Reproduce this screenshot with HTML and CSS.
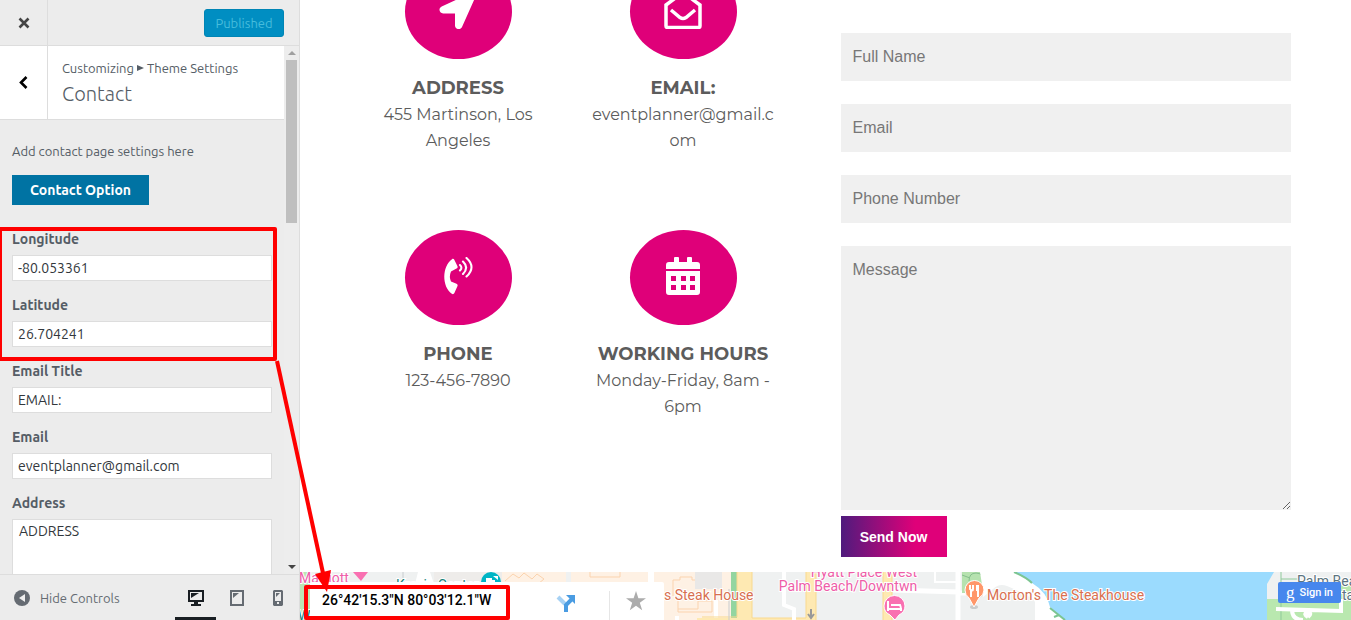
FILE: index.html
```html
<!DOCTYPE html>
<html lang="en">
<head>
<meta charset="utf-8">
<title>Customizing: Contact</title>
<link rel="stylesheet" href="styles.css">
</head>
<body>
<aside class="sidebar">
  <header class="topbar">
    <button class="close" aria-label="Close"><svg width="12" height="12" viewBox="0 0 12 12"><path d="M1.5 1.5l9 9M10.500 1.500l-9 9" stroke="#444" stroke-width="2.600"/></svg></button>
    <button class="publish" disabled>Published</button>
  </header>
  <div class="panel">
    <div class="panel-body">
      <div class="section-head">
        <button class="back" aria-label="Back"><svg width="10" height="14" viewBox="0 0 10 14"><path d="M7.500 1L2 6.500 7.500 12" fill="none" stroke="#000" stroke-width="2.600"/></svg></button>
        <div class="titles">
          <span class="crumb">Customizing <svg width="7" height="6" viewBox="0 0 7 6"><path d="M0 0l7 3-7 3z" fill="#555d66"/></svg> Theme Settings</span>
          <h3 class="title">Contact</h3>
        </div>
      </div>
      <form class="controls">
        <p class="description">Add contact page settings here</p>
        <button type="button" class="option">Contact Option</button>
        <div class="control"><label for="lng">Longitude</label><input id="lng" value="-80.053361"></div>
        <div class="control"><label for="lat">Latitude</label><input id="lat" value="26.704241"></div>
        <div class="control"><label for="etitle">Email Title</label><input id="etitle" value="EMAIL:"></div>
        <div class="control"><label for="email">Email</label><input id="email" value="eventplanner@gmail.com"></div>
        <div class="control"><label for="addr">Address</label><textarea id="addr">ADDRESS</textarea></div>
      </form>
    </div>
    <div class="scrollbar">
      <svg width="8" height="4" viewBox="0 0 8 4"><path d="M0 4l4-4 4 4z" fill="#a0a0a0"/></svg>
      <div class="thumb"></div>
      <svg class="down" width="8" height="4" viewBox="0 0 8 4"><path d="M0 0l4 4 4-4z" fill="#444"/></svg>
    </div>
  </div>
  <footer class="bottombar">
    <button class="collapse"><svg width="16" height="16" viewBox="0 0 16 16"><circle cx="8" cy="8" r="8" fill="#656b72"/><path d="M11 4v8L5 8z" fill="#eee"/></svg>Hide Controls</button>
    <div class="devices">
      <button class="device active" aria-label="Desktop"><svg width="16" height="16" viewBox="0 0 16 16"><path d="M0 0h16v12h-6v2h3v2H3v-2h3v-2H0zM2 2v8h12V2z" fill="#191e23" fill-rule="evenodd"/><path d="M3 3h8L3 8z" fill="#191e23"/></svg></button>
      <button class="device" aria-label="Tablet"><svg width="14" height="16" viewBox="0 0 14 16"><path d="M0 0h14v16H0zM2 2v12h10V2z" fill="#656b72" fill-rule="evenodd"/><path d="M3 3h6L3 8z" fill="#656b72"/></svg></button>
      <button class="device" aria-label="Mobile"><svg width="10" height="16" viewBox="0 0 10 16"><path d="M1 0h8l1 1v14l-1 1H1l-1-1V1zM2 2v9h6V2zM4 12v2h2v-2z" fill="#656b72" fill-rule="evenodd"/><path d="M3 3h4L3 7z" fill="#656b72"/></svg></button>
    </div>
  </footer>
</aside>

<main class="preview">
  <section class="contact">
    <div class="infos">
      <article class="info">
        <div class="disc"><svg width="38" height="38" viewBox="0 0 38 38"><path d="M34.500.8L2.700 15.500C-1 17.200.2 22.500 4.200 22.500H16v12c0 4 5.300 5 7 1.500L37.300 4c1-2.300-1-4.100-2.800-3.200z" fill="#fff"/></svg></div>
        <h4>ADDRESS</h4><p>455 Martinson, Los<br>Angeles</p>
      </article>
      <article class="info">
        <div class="disc"><svg width="38" height="38" viewBox="0 0 38 38"><path d="M2 35V14L16.500 3.200Q19 1.500 21.500 3.200L36 14v21q0 1.500-1.500 1.500h-31Q2 36.500 2 35z" fill="none" stroke="#fff" stroke-width="3.500"/><path d="M7 19l9 7.500q3 2 6 0L31 19" fill="none" stroke="#fff" stroke-width="3.500"/></svg></div>
        <h4>EMAIL:</h4><p>eventplanner@gmail.c<br>om</p>
      </article>
      <article class="info">
        <div class="disc"><svg width="34" height="38" viewBox="0 0 34 38"><path d="M11 2.200c1-.7 2-.2 2.400.7l3.100 6.300c.4 1-.1 2-1 2.300L10 14.500q-2.200 5 0 10l5.500 2.200c1 .4 1.400 1.400 1 2.300l-3.100 7c-.5 1.200-1.600 1.500-2.600.8C.8 29.500.8 9.500 11 2.200z" fill="#fff"/><path d="M19 8q2.800 2.500 0 5.500M22 4.500q6.200 6 0 12.500M25.500 1q10 9 0 18.500" fill="none" stroke="#fff" stroke-width="2.100" stroke-linecap="round"/></svg></div>
        <h4>PHONE</h4><p>123-456-7890</p>
      </article>
      <article class="info">
        <div class="disc"><svg width="34" height="38" viewBox="0 0 34 38"><path d="M3 5h5V1q0-1 1-1h3q1 0 1 1v4h8V1q0-1 1-1h3q1 0 1 1v4h5q3 0 3 3v4H0V8q0-3 3-3z" fill="#fff"/><path d="M0 14h34v21q0 3-3 3H3q-3 0-3-3zM5 19v5h5v-5zM15 19v5h5v-5zM24 19v5h5v-5zM5 28v5h5v-5zM15 28v5h5v-5zM24 28v5h5v-5z" fill="#fff" fill-rule="evenodd"/></svg></div>
        <h4>WORKING HOURS</h4><p>Monday-Friday, 8am -<br>6pm</p>
      </article>
    </div>
    <form class="message">
      <input placeholder="Full Name" aria-label="Full Name">
      <input placeholder="Email" aria-label="Email" type="email">
      <input placeholder="Phone Number" aria-label="Phone Number">
      <textarea placeholder="Message" aria-label="Message"></textarea>
      <button type="button" class="send">Send Now</button>
    </form>
  </section>

  <section class="map">
    <svg class="tiles" width="1051" height="48" viewBox="0 0 1051 48">
      <rect width="1051" height="48" fill="#eff1f1"/>
      <path d="M0 0h10v48H0z" fill="#bce7b5"/>
      <path d="M134 0h128v12H134z" fill="#eeecea"/>
      <path d="M202 0h64v12h-64zM271 0h77v12h-77zM354 0h77v48h-77z" fill="#fef1e4"/>
      <path d="M205 9l8-7 6 4 5-5 8 6 5-5 7 5-6 5M290 0v5h30V0M373 24V8h7V5h12v3h12V0M378 27v13h34V29h-14v8h-20" fill="none" stroke="#fbd3ae"/>
      <path d="M395 0h27v17h-27z" fill="#e9e8e7"/>
      <path d="M416 28v20M377 44v4" stroke="#fff" stroke-width="4"/>
      <path d="M431 0h6v48h-6z" fill="#93d5a0"/>
      <path d="M437 0h15v48h-15zM506 0h10v48h-10zM583 0h9v48h-9zM397 46h110v2H397z" fill="#fee9b2"/>
      <path d="M437 0v45h-35M452 0v46h54V0M516 0v48M583 0v48M592 0v48" fill="none" stroke="#f9d98e"/>
      <path d="M429 17v31" stroke="#c8cccf"/>
      <path d="M115 12l3-12h12l4 12zM348 0h6v12h-6z" fill="#fff"/>
      <path d="M484 0v33l10 4v11" fill="none" stroke="#fff" stroke-width="4"/>
      <path d="M635 0v10h22" fill="none" stroke="#fff" stroke-width="2"/>
      <path d="M593 18l66 2M658 0v48M659 21h18" fill="none" stroke="#fff" stroke-width="5"/>
      <path d="M662 0h18l12 8-11 13h-19z" fill="#b6e2af"/>
      <path d="M669 9q0-8 7-8t8 8M662 3l8 3M682 6l6-4" fill="none" stroke="#84bf8b"/>
      <path d="M680 0h50q19 15 20 35l15 13h-30V30q-2-5-28-16-8-3-14 3l-10 8v-6z" fill="#fff"/>
      <path d="M716 0h258l-7 12v36H765l-15-13q-3-15-18-24-8-6-16-11z" fill="#9bdbfe"/>
      <path d="M714 0q12 5 18 11M750 36l15 12M754 45l5-2" fill="none" stroke="#7cc591" stroke-width="2"/>
      <path d="M967 27h84v21h-84zM1040 10h11v38h-11z" fill="#b9e8af"/>
      <path d="M981 0v48M981 7h17" fill="none" stroke="#8fc99a"/>
      <path d="M976 37l65 2V27M1003 48q-10 0-11-9M1008 45q-5-3-1-5 6 1 1 5" fill="none" stroke="#fff" stroke-width="4"/>
      <path d="M103 0v12" stroke="#c8cccf"/>
      <path d="M511 37v9M508 42l3 4 3-4" fill="none" stroke="#999" stroke-width="2"/>
      <g class="pin-labels">
        <text x="-1" y="11" fill="#ee5da8">Marriott</text>
        <text x="96" y="18" fill="#168179">Kravis Center</text>
        <text x="-2" y="49" fill="#168179">W</text>
        <text x="364" y="28" fill="#d86f50">s Steak House</text>
        <text x="564" y="5" text-anchor="middle" fill="#ee5da8">Hyatt Place West</text>
        <text x="548" y="19" text-anchor="middle" fill="#ee5da8">Palm Beach/Downtwn</text>
        <text x="687" y="28" fill="#d86f50">Morton's The Steakhouse</text>
        <text x="997" y="14" fill="#5c7480">Palm Beach</text>
        <text x="1042" y="28" fill="#5c7480">ta</text>
      </g>
      <path d="M53 0h15l-7 9z" fill="#f970b1"/>
      <circle cx="191" cy="10" r="10" fill="#00b5c5"/><path d="M186 6h6v2h3v7h-9zM193 4h5v4" fill="#fff"/>
      <path d="M584 34a10 10 0 1 1 21 0q0 6-6 9l-4 5-5-5q-6-3-6-9z" fill="#f970b1" stroke="#fff"/>
      <path d="M588 29v10M588 37h13v2M591 33h9l1 3" fill="none" stroke="#fff" stroke-width="2"/>
      <ellipse cx="674" cy="35" rx="4" ry="2" fill="#c9cbcc"/>
      <path d="M665 18a9 9 0 1 1 19 0q0 5-5 8l-5 9-5-9q-4-3-4-8z" fill="#ff976a" stroke="#fff"/>
      <path d="M670 13v4q3 3 3 0v-4M671 18v7M678 13v12M677 13v6" fill="none" stroke="#fff" stroke-width="2"/>
    </svg>
    <div class="place-card">
      <strong>26°42'15.3"N 80°03'12.1"W</strong>
      <button class="directions" aria-label="Directions"><svg width="20" height="20" viewBox="0 0 20 20"><path d="M2 5l7 7" stroke="#a6d1f4" stroke-width="4"/><path d="M10 20v-7l6-6" fill="none" stroke="#4a9ce2" stroke-width="4"/><path d="M10 3h9v9z" fill="#4a9ce2"/></svg></button>
      <button class="save" aria-label="Save"><svg width="20" height="20" viewBox="0 0 20 20"><path d="M10 0l2.400 7.300H20l-6.200 4.500 2.400 7.500-6.200-4.600-6.200 4.600 2.400-7.500L0 7.300h7.600z" fill="#acacac"/></svg></button>
    </div>
    <button class="signin"><span class="g">g</span>Sign in</button>
  </section>
</main>

<svg class="annotation" width="520" height="620" viewBox="0 0 520 620" aria-hidden="true">
  <g fill="none" stroke="#f00" stroke-width="4">
    <rect x="0" y="229" width="275" height="130" stroke-linejoin="round"/>
    <rect x="306" y="587" width="202" height="31" stroke-linejoin="round"/>
    <path d="M277 361l46 212"/>
  </g>
  <path d="M315 574l16-4-4 22z" fill="#f00"/>
</svg>
</body>
</html>
```
FILE: styles.css
```css
* { box-sizing: border-box; }
body { margin: 0; height: 100vh; display: flex; overflow: hidden; position: relative; background: #fff; }
button, input, textarea { font: inherit; margin: 0; border: 0; border-radius: 0; outline: 0; }
button { padding: 0; background: none; }
h3, h4, p { margin: 0; }
svg { display: block; flex: none; }

.sidebar { width: 300px; flex: none; display: flex; flex-direction: column; background: #ececec; border-right: 1px solid #ddd; color: #555d66; font: 13px/18px Ubuntu, "Open Sans", sans-serif; }
.topbar { height: 46px; flex: none; display: flex; align-items: center; justify-content: space-between; border-bottom: 1px solid #ddd; padding-right: 15px; }
.close { width: 48px; height: 45px; border-right: 1px solid #ddd; display: grid; place-items: center; }
.publish { width: 80px; height: 28px; border: 1px solid #0085b5; border-radius: 3px; background: #008ec2; color: #46bcdc; }
.panel { flex: 1; min-height: 0; display: flex; }
.panel-body { flex: 1; overflow: hidden; }
.section-head { height: 74px; display: flex; background: #fff; border-bottom: 1px solid #ddd; }
.back { width: 48px; border-right: 1px solid #ddd; display: grid; place-items: center; }
.titles { padding: 13px 14px; }
.crumb { display: flex; align-items: center; gap: 3px; white-space: nowrap; }
.title { margin-top: 4px; font-size: 20px; line-height: 26px; font-weight: 300; }
.controls { padding: 22px 12px; }
.option { margin: 15px 0 25px; width: 137px; height: 30px; background: #0073a3; color: #fff; font-size: 14px; font-weight: 700; display: block; }
.control { margin-bottom: 15px; }
.control label { display: block; margin-bottom: 7px; font-size: 14px; font-weight: 600; }
.control input, .control textarea { display: block; width: 100%; height: 26px; border: 1px solid #ddd; padding: 0 5px; background: #fff; color: #32373c; font-size: 14px; resize: none; }
.control textarea { height: 100px; padding: 2px 6px; }
.scrollbar { width: 15px; padding: 5px 2px 5px 2px; display: flex; flex-direction: column; align-items: center; gap: 5px; background: #ededed; }
.thumb { width: 11px; height: 163px; background: #bfbfbf; }
.down { margin-top: auto; }
.bottombar { height: 46px; flex: none; display: flex; justify-content: space-between; border-top: 1px solid #ddd; padding: 0 1px 0 14px; }
.collapse { display: flex; align-items: center; gap: 10px; color: #656b72; }
.devices { display: flex; }
.device { width: 41px; display: grid; place-items: center; border-bottom: 3px solid transparent; padding-top: 4px; }
.active { border-color: #191e23; }

.preview { flex: 1; min-width: 0; display: flex; flex-direction: column; }
.contact { flex: 1; min-height: 0; display: flex; justify-content: center; gap: 45px; padding: 0 15px 0 0; }
.infos { flex: none; width: 450px; margin-top: -36px; display: grid; grid-template-columns: 1fr 1fr; align-content: start; row-gap: 76px; color: #5c5c5c; text-align: center; font: 400 16px/26px Montserrat, Inter, sans-serif; }
.disc { width: 107px; height: 95px; border-radius: 50%; background: #df0079; margin: 0 auto 16px; padding-bottom: 4px; display: grid; place-items: center; }
.info h4 { font-size: 18px; line-height: 27px; font-weight: 700; }
.info p { height: 52px; }
.message { flex: 0 1 450px; padding-top: 33px; font: 16px/24px "Liberation Sans", Arial, sans-serif; }
.message input, .message textarea { display: block; width: 100%; height: 48px; margin-bottom: 23px; padding: 12px; background: #f0f0f0; }
.message textarea { height: 264px; margin-bottom: 6px; }
.message ::placeholder { color: #777; opacity: 1; }
.send { width: 106px; height: 41px; background: linear-gradient(90deg, #4f1b7d, #df0079 70%); color: #fff; font-size: 14px; font-weight: 700; }

.map { height: 48px; flex: none; position: relative; overflow: hidden; background: #eff1f1; font-family: Roboto, sans-serif; }
.pin-labels { font-size: 14px; paint-order: stroke; stroke: #fff; stroke-width: 2px; }
.place-card { position: absolute; left: 10px; top: 10px; width: 354px; height: 60px; display: flex; align-items: flex-start; background: #fff; border-radius: 2px; padding: 9px 18px 0 12px; }
.place-card strong { flex: 1; font-size: 14px; line-height: 18px; font-weight: 500; color: #000; }
.directions { padding: 1px 33px 0 0; }
.save { height: 40px; display: flex; border-left: 1px solid #e6e6e6; padding-left: 16px; }
.signin { position: absolute; right: 10px; top: 10px; width: 63px; height: 21px; border-radius: 2px; background: #4787ed; color: #fff; font-size: 11px; font-weight: 500; display: flex; align-items: center; justify-content: center; gap: 5px; }
.g { font: 17px/18px "Liberation Serif", serif; }
.annotation { position: absolute; left: 0; top: 0; pointer-events: none; }
```
